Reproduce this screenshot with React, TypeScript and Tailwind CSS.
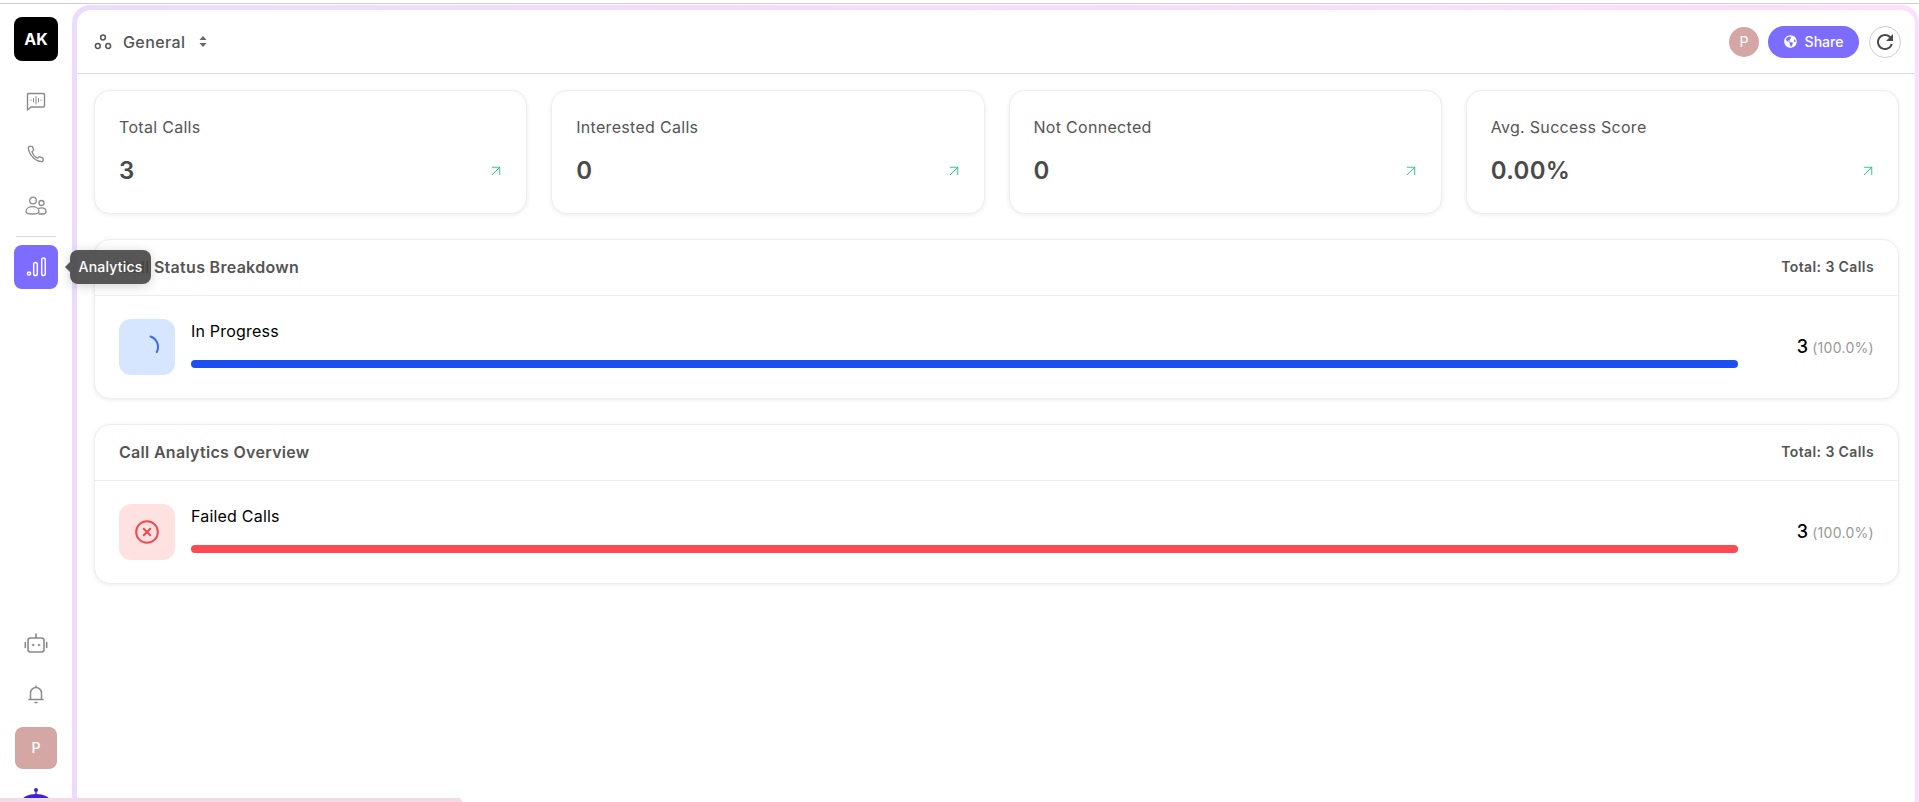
import { ArrowUpRight, CircleX } from "lucide-react";
import { FaGlobeAmericas } from "react-icons/fa";
import { MdRefresh } from "react-icons/md";

const stats = [
  { label: "Total Calls", value: "3" },
  { label: "Interested Calls", value: "0" },
  { label: "Not Connected", value: "0" },
  { label: "Avg. Success Score", value: "0.00%" },
];

function VoiceChatIcon() {
  return (
    <svg width="20" height="20" viewBox="0 0 20 20" fill="none" stroke="#8a8a8a" strokeWidth="1.4" strokeLinecap="round" strokeLinejoin="round">
      <path d="M1.5 18V2.500a1 1 0 0 1 1-1h15a1 1 0 0 1 1 1V14a1 1 0 0 1-1 1H5z" />
      <path d="M5 8v.5M7.500 6.500v3.500M10 4.500v7.500M12.500 6.500v3.500M15 8v.5" strokeWidth="1" />
    </svg>
  );
}

function PhoneIcon() {
  return (
    <svg width="18" height="18" viewBox="0 0 20 20" fill="none" stroke="#8a8a8a" strokeWidth="1.500" strokeLinecap="round" strokeLinejoin="round">
      <path d="M3 1.500h2.200c.4 0 .7.200.9.600l1.200 3c.1.400 0 .7-.3 1L5.600 7.300c.9 3 3.200 5.900 6.300 7.300l1.300-1.300c.3-.3.700-.4 1.100-.2l3 1.100c.4.200.6.500.6.900v1.600c0 1-.8 1.800-1.800 1.700C9 17.800 2.300 11 1.500 3.300 1.400 2.300 2 1.500 3 1.500z" />
    </svg>
  );
}

function UsersIcon() {
  return (
    <svg width="22" height="20" viewBox="0 0 22 20" fill="none" stroke="#8a8a8a" strokeWidth="1.300" strokeLinecap="round" strokeLinejoin="round">
      <circle cx="8" cy="4.500" r="3.300" />
      <circle cx="16.500" cy="7" r="2.500" />
      <path d="M1 15.500c0-3 3-4.800 6.500-4.800s6.500 1.800 6.500 4.800c0 1.700-1.500 2.500-6.500 2.500S1 17.200 1 15.500z" />
      <path d="M14 18h4c2 0 3-.8 3-2.500 0-2.200-2-3.700-4.500-3.700-1 0-1.800.2-2.600.6" />
    </svg>
  );
}

function BarsIcon() {
  return (
    <svg width="20" height="20" viewBox="0 0 20 20" fill="none" stroke="#fff" strokeWidth="1.500">
      <circle cx="3" cy="16.500" r="1.600" />
      <rect x="7.700" y="5.500" width="3.600" height="13" rx="1.800" />
      <rect x="15.700" y="1" width="3.600" height="17.500" rx="1.800" />
    </svg>
  );
}

function RobotIcon() {
  return (
    <svg width="24" height="24" viewBox="0 0 24 24" fill="none" stroke="#8a8a8a" strokeWidth="1.600" strokeLinecap="round">
      <rect x="4" y="6" width="16" height="14" rx="2.500" />
      <path d="M12 2v4M1.300 10.500v5M22.700 10.500v5" />
      <circle cx="9" cy="13" r=".9" fill="#8a8a8a" strokeWidth=".6" />
      <circle cx="15" cy="13" r=".9" fill="#8a8a8a" strokeWidth=".6" />
    </svg>
  );
}

function BellIcon() {
  return (
    <svg width="20" height="20" viewBox="0 0 20 20" fill="none" stroke="#8a8a8a" strokeWidth="1.500" strokeLinecap="round" strokeLinejoin="round">
      <path d="M4.500 15V9a5.500 5.500 0 0 1 11 0v6" />
      <path d="M3 15.500h14M10 2v1.200M9 18.500h2" />
    </svg>
  );
}

function WorkspaceIcon() {
  return (
    <svg width="18" height="18" viewBox="0 0 18 18" fill="none" stroke="#555" strokeWidth="1.500">
      <circle cx="9" cy="4.500" r="2.400" />
      <circle cx="3.800" cy="13" r="2.400" />
      <circle cx="14.200" cy="13" r="2.400" />
    </svg>
  );
}

function SortIcon() {
  return (
    <svg width="8" height="11" viewBox="0 0 8 11" fill="#666">
      <path d="M4 0l3.500 4H.5zM4 11L.5 7h7z" />
    </svg>
  );
}

function Spinner() {
  return (
    <svg width="24" height="24" viewBox="0 0 24 24" fill="none" stroke="#3f6df0" strokeWidth="2" strokeLinecap="round">
      <path d="M15.500 1.500A11 11 0 0 1 21.800 17" />
    </svg>
  );
}

function RobotDome() {
  return (
    <svg width="30" height="11" viewBox="0 0 30 11" fill="#3b22d8">
      <circle cx="15" cy="3" r="2" />
      <rect x="14.300" y="3" width="1.400" height="5" />
      <ellipse cx="15" cy="14" rx="14" ry="7" />
    </svg>
  );
}

function NavIcon({ children }: { children: React.ReactNode }) {
  return <div className="flex h-[52px] w-11 items-center justify-center">{children}</div>;
}

function Sidebar() {
  return (
    <aside className="flex w-[72px] shrink-0 flex-col items-center justify-between pb-1 pt-3">
      <div className="flex flex-col items-center">
        <div className="flex h-11 w-11 items-center justify-center rounded-lg bg-black text-base font-bold text-white">AK</div>
        <div className="mt-[15px] flex flex-col items-center">
          <NavIcon>
            <VoiceChatIcon />
          </NavIcon>
          <NavIcon>
            <PhoneIcon />
          </NavIcon>
          <NavIcon>
            <UsersIcon />
          </NavIcon>
        </div>
        <div className="mb-2 mt-1 h-px w-10 bg-[#d9d9d9]" />
        <div className="relative z-20 flex h-11 w-11 items-center justify-center rounded-lg bg-[#7c6cff]">
          <BarsIcon />
          <div className="absolute left-[56px] top-[5px] flex h-[34px] w-[81px] items-center justify-center whitespace-nowrap rounded-lg bg-[#444]/90 text-sm font-medium tracking-[0.2px] text-white shadow-[0_2px_12px_rgba(0,0,0,0.18)]">
            Analytics
            <span className="absolute left-[-5px] top-[12px] h-0 w-0 border-y-[5px] border-r-[5px] border-y-transparent border-r-[#555]" />
          </div>
        </div>
      </div>
      <div className="flex flex-col items-center">
        <div className="flex h-[50px] w-11 items-center justify-center">
          <RobotIcon />
        </div>
        <div className="flex h-[50px] w-11 items-center justify-center">
          <BellIcon />
        </div>
        <div className="mb-px mt-2 flex h-[42px] w-[42px] items-center justify-center rounded-lg bg-[#d4a7a5] text-sm font-medium text-white">P</div>
        <div className="mt-[17px] h-[11px]">
          <RobotDome />
        </div>
      </div>
    </aside>
  );
}

function StatCard({ label, value }: { label: string; value: string }) {
  return (
    <div className="flex h-[124px] flex-col rounded-2xl border border-[#eeeeee] bg-white px-6 pt-6 shadow-[0_1px_4px_rgba(0,0,0,0.08)]">
      <div className="text-base leading-6 tracking-[0.3px] text-[#555]">{label}</div>
      <div className="mt-[14px] flex items-center justify-between">
        <span className="text-2xl font-semibold leading-9 tracking-[0.3px] text-[#4a4a4a]">{value}</span>
        <ArrowUpRight size={18} strokeWidth={1.200} color="#10c97f" className="-mr-[3px]" />
      </div>
    </div>
  );
}

function BreakdownCard({
  title,
  label,
  icon,
  iconBg,
  barColor,
}: {
  title: string;
  label: string;
  icon: React.ReactNode;
  iconBg: string;
  barColor: string;
}) {
  return (
    <section className="h-40 rounded-2xl border border-[#eeeeee] bg-white shadow-[0_1px_4px_rgba(0,0,0,0.08)]">
      <div className="flex h-14 items-center justify-between border-b border-[#eeeeee] px-6">
        <h2 className="-mt-0.5 text-base font-semibold tracking-[0.3px] text-[#555]">{title}</h2>
        <span className="-mt-0.5 text-sm font-semibold tracking-[0.4px] text-[#555]">Total: 3 Calls</span>
      </div>
      <div className="flex px-6 pt-[23px]">
        <div className={`flex h-14 w-14 shrink-0 items-center justify-center rounded-xl ${iconBg}`}>{icon}</div>
        <div className="ml-4 flex-1">
          <div className="text-base leading-6 tracking-[0.2px] text-black">{label}</div>
          <div className={`mt-[17px] h-2 rounded-full ${barColor}`} />
        </div>
        <div className="w-[136px] self-center text-right">
          <span className="text-lg font-medium text-black">3</span>
          <span className="ml-1 text-sm tracking-[0.3px] text-[#999]">(100.0%)</span>
        </div>
      </div>
    </section>
  );
}

export default function App() {
  return (
    <div className="relative flex h-[802px] w-full flex-col overflow-hidden bg-white font-['Inter',sans-serif]">
      <div className="mt-[3px] h-px shrink-0 bg-[#cfcfcf]" />
      <div className="flex min-h-0 flex-1 pt-px">
        <Sidebar />
        <div className="min-w-0 flex-1 rounded-t-[18px] bg-gradient-to-r from-[#ecdcfb] to-[#fbdffb] pl-[5px] pr-1 pt-[5px]">
          <main className="h-full rounded-t-[14px] bg-white">
            <header className="flex h-[64px] items-center justify-between border-b border-[#dddddd] pl-[17px] pr-[14px]">
              <div className="flex items-center">
                <WorkspaceIcon />
                <span className="ml-[11px] text-base font-medium tracking-[0.4px] text-[#555]">General</span>
                <span className="ml-[14px]">
                  <SortIcon />
                </span>
              </div>
              <div className="flex items-center">
                <div className="flex h-[30px] w-[30px] items-center justify-center rounded-full bg-[#d4a7a5] text-sm text-white">P</div>
                <button className="ml-[9px] flex h-8 w-[91px] items-center justify-center gap-2 rounded-full bg-[#7c6cff] text-sm font-medium text-white">
                  <FaGlobeAmericas size={13} />
                  Share
                </button>
                <button className="ml-[10px] flex h-8 w-8 items-center justify-center rounded-full border border-[#d0d0d0] bg-white">
                  <MdRefresh size={24} color="#4a4a4a" />
                </button>
              </div>
            </header>
            <div className="flex flex-col gap-[25px] pl-[17px] pr-4 pt-4">
              <div className="grid grid-cols-4 gap-6">
                {stats.map((s) => (
                  <StatCard key={s.label} label={s.label} value={s.value} />
                ))}
              </div>
              <BreakdownCard
                title="Call Status Breakdown"
                label="In Progress"
                icon={<Spinner />}
                iconBg="bg-[#d5e6fe]"
                barColor="bg-[#1d4ff0]"
              />
              <BreakdownCard
                title="Call Analytics Overview"
                label="Failed Calls"
                icon={<CircleX size={26} strokeWidth={1.800} color="#f0484e" />}
                iconBg="bg-[#fee2e2]"
                barColor="bg-[#fb4b50]"
              />
            </div>
          </main>
        </div>
      </div>
      {/* pink strip peeking in at the bottom edge */}
      <div className="absolute bottom-0 left-0 z-30 h-1 w-[462px] rounded-tr-md bg-[#f5d9e8]" />
    </div>
  );
}
